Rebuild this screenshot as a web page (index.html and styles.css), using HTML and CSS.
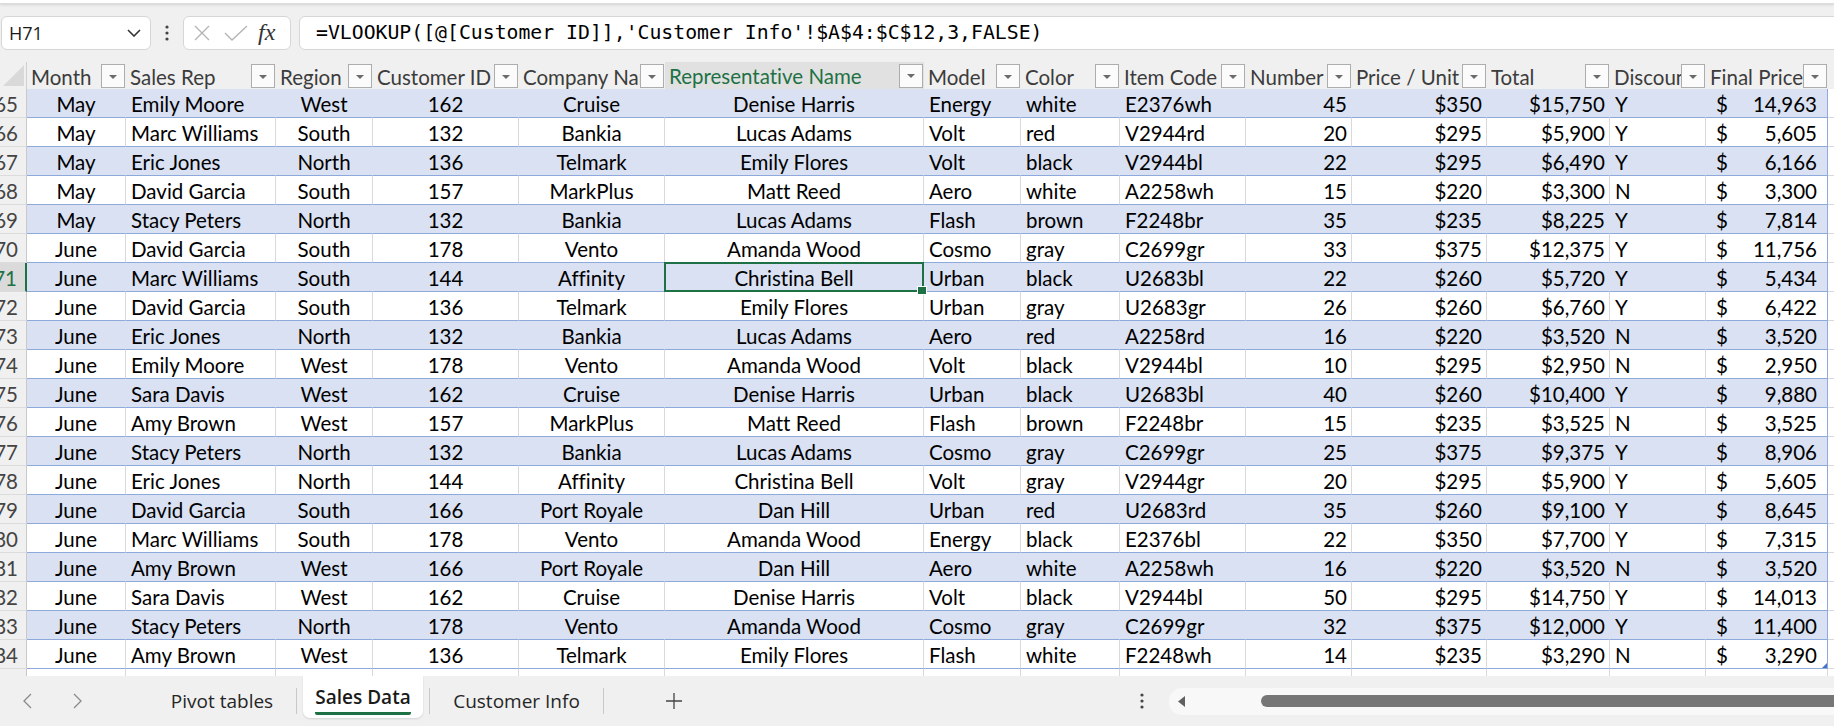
FILE: index.html
```html
<!DOCTYPE html>
<html>
<head>
<meta charset="utf-8">
<title>Sales Data</title>
<link rel="stylesheet" href="styles.css">
</head>
<body>
<div class="ribbon-edge"></div>
<div class="formula-bar">
  <div class="namebox"><span class="ref">H71</span><svg class="chev" width="14" height="8" viewBox="0 0 14 8"><path d="M1 1 L7 7 L13 1" fill="none" stroke="#333" stroke-width="1.6"/></svg></div>
  <div class="fb-dots"><svg width="4" height="16" viewBox="0 0 4 16"><circle cx="2" cy="2" r="1.6" fill="#444"/><circle cx="2" cy="8" r="1.6" fill="#444"/><circle cx="2" cy="14" r="1.6" fill="#444"/></svg></div>
  <div class="fxbox">
    <svg class="ic-x" width="16" height="16" viewBox="0 0 16 16"><path d="M1 1 L15 15 M15 1 L1 15" stroke="#b3b3b3" stroke-width="1.3" fill="none"/></svg>
    <svg class="ic-ok" width="24" height="16" viewBox="0 0 24 16"><path d="M1 8 L8 15 L23 1" stroke="#b3b3b3" stroke-width="1.3" fill="none"/></svg>
    <span class="fx">fx</span>
  </div>
  <div class="formula">=VLOOKUP([@[Customer ID]],'Customer Info'!$A$4:$C$12,3,FALSE)</div>
</div>

<div class="sheet">
  <div class="row head">
    <div class="corner"><svg width="27" height="27" viewBox="0 0 27 27"><polygon points="24,3 24,24 3,24" fill="#d9d9d9"/></svg></div>
    <div class="hc"><span class="hl">Month</span><span class="fbtn"><i></i></span></div>
    <div class="hc"><span class="hl">Sales Rep</span><span class="fbtn"><i></i></span></div>
    <div class="hc"><span class="hl">Region</span><span class="fbtn"><i></i></span></div>
    <div class="hc"><span class="hl">Customer ID</span><span class="fbtn"><i></i></span></div>
    <div class="hc"><span class="hl">Company Name</span><span class="fbtn"><i></i></span></div>
    <div class="hc selcol"><span class="hl">Representative Name</span><span class="fbtn"><i></i></span></div>
    <div class="hc"><span class="hl">Model</span><span class="fbtn"><i></i></span></div>
    <div class="hc"><span class="hl">Color</span><span class="fbtn"><i></i></span></div>
    <div class="hc"><span class="hl">Item Code</span><span class="fbtn"><i></i></span></div>
    <div class="hc"><span class="hl">Number</span><span class="fbtn"><i></i></span></div>
    <div class="hc"><span class="hl">Price / Unit</span><span class="fbtn"><i></i></span></div>
    <div class="hc"><span class="hl">Total</span><span class="fbtn"><i></i></span></div>
    <div class="hc"><span class="hl">Discount</span><span class="fbtn"><i></i></span></div>
    <div class="hc"><span class="hl">Final Price</span><span class="fbtn"><i></i></span></div>
    <div class="hc out"></div>
  </div>

  <div class="row band"><div class="rh">65</div><div class="c ctr">May</div><div class="c">Emily Moore</div><div class="c ctr">West</div><div class="c ctr">162</div><div class="c ctr">Cruise</div><div class="c ctr">Denise Harris</div><div class="c">Energy</div><div class="c">white</div><div class="c">E2376wh</div><div class="c num">45</div><div class="c num">$350</div><div class="c num">$15,750</div><div class="c">Y</div><div class="c acct last"><span>$</span><span>14,963</span></div><div class="c out"></div></div>
  <div class="row plain"><div class="rh">66</div><div class="c ctr">May</div><div class="c">Marc Williams</div><div class="c ctr">South</div><div class="c ctr">132</div><div class="c ctr">Bankia</div><div class="c ctr">Lucas Adams</div><div class="c">Volt</div><div class="c">red</div><div class="c">V2944rd</div><div class="c num">20</div><div class="c num">$295</div><div class="c num">$5,900</div><div class="c">Y</div><div class="c acct last"><span>$</span><span>5,605</span></div><div class="c out"></div></div>
  <div class="row band"><div class="rh">67</div><div class="c ctr">May</div><div class="c">Eric Jones</div><div class="c ctr">North</div><div class="c ctr">136</div><div class="c ctr">Telmark</div><div class="c ctr">Emily Flores</div><div class="c">Volt</div><div class="c">black</div><div class="c">V2944bl</div><div class="c num">22</div><div class="c num">$295</div><div class="c num">$6,490</div><div class="c">Y</div><div class="c acct last"><span>$</span><span>6,166</span></div><div class="c out"></div></div>
  <div class="row plain"><div class="rh">68</div><div class="c ctr">May</div><div class="c">David Garcia</div><div class="c ctr">South</div><div class="c ctr">157</div><div class="c ctr">MarkPlus</div><div class="c ctr">Matt Reed</div><div class="c">Aero</div><div class="c">white</div><div class="c">A2258wh</div><div class="c num">15</div><div class="c num">$220</div><div class="c num">$3,300</div><div class="c">N</div><div class="c acct last"><span>$</span><span>3,300</span></div><div class="c out"></div></div>
  <div class="row band"><div class="rh">69</div><div class="c ctr">May</div><div class="c">Stacy Peters</div><div class="c ctr">North</div><div class="c ctr">132</div><div class="c ctr">Bankia</div><div class="c ctr">Lucas Adams</div><div class="c">Flash</div><div class="c">brown</div><div class="c">F2248br</div><div class="c num">35</div><div class="c num">$235</div><div class="c num">$8,225</div><div class="c">Y</div><div class="c acct last"><span>$</span><span>7,814</span></div><div class="c out"></div></div>
  <div class="row plain"><div class="rh">70</div><div class="c ctr">June</div><div class="c">David Garcia</div><div class="c ctr">South</div><div class="c ctr">178</div><div class="c ctr">Vento</div><div class="c ctr">Amanda Wood</div><div class="c">Cosmo</div><div class="c">gray</div><div class="c">C2699gr</div><div class="c num">33</div><div class="c num">$375</div><div class="c num">$12,375</div><div class="c">Y</div><div class="c acct last"><span>$</span><span>11,756</span></div><div class="c out"></div></div>
  <div class="row band"><div class="rh selrow">71</div><div class="c ctr">June</div><div class="c">Marc Williams</div><div class="c ctr">South</div><div class="c ctr">144</div><div class="c ctr">Affinity</div><div class="c ctr sel">Christina Bell</div><div class="c">Urban</div><div class="c">black</div><div class="c">U2683bl</div><div class="c num">22</div><div class="c num">$260</div><div class="c num">$5,720</div><div class="c">Y</div><div class="c acct last"><span>$</span><span>5,434</span></div><div class="c out"></div></div>
  <div class="row plain"><div class="rh">72</div><div class="c ctr">June</div><div class="c">David Garcia</div><div class="c ctr">South</div><div class="c ctr">136</div><div class="c ctr">Telmark</div><div class="c ctr">Emily Flores</div><div class="c">Urban</div><div class="c">gray</div><div class="c">U2683gr</div><div class="c num">26</div><div class="c num">$260</div><div class="c num">$6,760</div><div class="c">Y</div><div class="c acct last"><span>$</span><span>6,422</span></div><div class="c out"></div></div>
  <div class="row band"><div class="rh">73</div><div class="c ctr">June</div><div class="c">Eric Jones</div><div class="c ctr">North</div><div class="c ctr">132</div><div class="c ctr">Bankia</div><div class="c ctr">Lucas Adams</div><div class="c">Aero</div><div class="c">red</div><div class="c">A2258rd</div><div class="c num">16</div><div class="c num">$220</div><div class="c num">$3,520</div><div class="c">N</div><div class="c acct last"><span>$</span><span>3,520</span></div><div class="c out"></div></div>
  <div class="row plain"><div class="rh">74</div><div class="c ctr">June</div><div class="c">Emily Moore</div><div class="c ctr">West</div><div class="c ctr">178</div><div class="c ctr">Vento</div><div class="c ctr">Amanda Wood</div><div class="c">Volt</div><div class="c">black</div><div class="c">V2944bl</div><div class="c num">10</div><div class="c num">$295</div><div class="c num">$2,950</div><div class="c">N</div><div class="c acct last"><span>$</span><span>2,950</span></div><div class="c out"></div></div>
  <div class="row band"><div class="rh">75</div><div class="c ctr">June</div><div class="c">Sara Davis</div><div class="c ctr">West</div><div class="c ctr">162</div><div class="c ctr">Cruise</div><div class="c ctr">Denise Harris</div><div class="c">Urban</div><div class="c">black</div><div class="c">U2683bl</div><div class="c num">40</div><div class="c num">$260</div><div class="c num">$10,400</div><div class="c">Y</div><div class="c acct last"><span>$</span><span>9,880</span></div><div class="c out"></div></div>
  <div class="row plain"><div class="rh">76</div><div class="c ctr">June</div><div class="c">Amy Brown</div><div class="c ctr">West</div><div class="c ctr">157</div><div class="c ctr">MarkPlus</div><div class="c ctr">Matt Reed</div><div class="c">Flash</div><div class="c">brown</div><div class="c">F2248br</div><div class="c num">15</div><div class="c num">$235</div><div class="c num">$3,525</div><div class="c">N</div><div class="c acct last"><span>$</span><span>3,525</span></div><div class="c out"></div></div>
  <div class="row band"><div class="rh">77</div><div class="c ctr">June</div><div class="c">Stacy Peters</div><div class="c ctr">North</div><div class="c ctr">132</div><div class="c ctr">Bankia</div><div class="c ctr">Lucas Adams</div><div class="c">Cosmo</div><div class="c">gray</div><div class="c">C2699gr</div><div class="c num">25</div><div class="c num">$375</div><div class="c num">$9,375</div><div class="c">Y</div><div class="c acct last"><span>$</span><span>8,906</span></div><div class="c out"></div></div>
  <div class="row plain"><div class="rh">78</div><div class="c ctr">June</div><div class="c">Eric Jones</div><div class="c ctr">North</div><div class="c ctr">144</div><div class="c ctr">Affinity</div><div class="c ctr">Christina Bell</div><div class="c">Volt</div><div class="c">gray</div><div class="c">V2944gr</div><div class="c num">20</div><div class="c num">$295</div><div class="c num">$5,900</div><div class="c">Y</div><div class="c acct last"><span>$</span><span>5,605</span></div><div class="c out"></div></div>
  <div class="row band"><div class="rh">79</div><div class="c ctr">June</div><div class="c">David Garcia</div><div class="c ctr">South</div><div class="c ctr">166</div><div class="c ctr">Port Royale</div><div class="c ctr">Dan Hill</div><div class="c">Urban</div><div class="c">red</div><div class="c">U2683rd</div><div class="c num">35</div><div class="c num">$260</div><div class="c num">$9,100</div><div class="c">Y</div><div class="c acct last"><span>$</span><span>8,645</span></div><div class="c out"></div></div>
  <div class="row plain"><div class="rh">80</div><div class="c ctr">June</div><div class="c">Marc Williams</div><div class="c ctr">South</div><div class="c ctr">178</div><div class="c ctr">Vento</div><div class="c ctr">Amanda Wood</div><div class="c">Energy</div><div class="c">black</div><div class="c">E2376bl</div><div class="c num">22</div><div class="c num">$350</div><div class="c num">$7,700</div><div class="c">Y</div><div class="c acct last"><span>$</span><span>7,315</span></div><div class="c out"></div></div>
  <div class="row band"><div class="rh">81</div><div class="c ctr">June</div><div class="c">Amy Brown</div><div class="c ctr">West</div><div class="c ctr">166</div><div class="c ctr">Port Royale</div><div class="c ctr">Dan Hill</div><div class="c">Aero</div><div class="c">white</div><div class="c">A2258wh</div><div class="c num">16</div><div class="c num">$220</div><div class="c num">$3,520</div><div class="c">N</div><div class="c acct last"><span>$</span><span>3,520</span></div><div class="c out"></div></div>
  <div class="row plain"><div class="rh">82</div><div class="c ctr">June</div><div class="c">Sara Davis</div><div class="c ctr">West</div><div class="c ctr">162</div><div class="c ctr">Cruise</div><div class="c ctr">Denise Harris</div><div class="c">Volt</div><div class="c">black</div><div class="c">V2944bl</div><div class="c num">50</div><div class="c num">$295</div><div class="c num">$14,750</div><div class="c">Y</div><div class="c acct last"><span>$</span><span>14,013</span></div><div class="c out"></div></div>
  <div class="row band"><div class="rh">83</div><div class="c ctr">June</div><div class="c">Stacy Peters</div><div class="c ctr">North</div><div class="c ctr">178</div><div class="c ctr">Vento</div><div class="c ctr">Amanda Wood</div><div class="c">Cosmo</div><div class="c">gray</div><div class="c">C2699gr</div><div class="c num">32</div><div class="c num">$375</div><div class="c num">$12,000</div><div class="c">Y</div><div class="c acct last"><span>$</span><span>11,400</span></div><div class="c out"></div></div>
  <div class="row plain"><div class="rh">84</div><div class="c ctr">June</div><div class="c">Amy Brown</div><div class="c ctr">West</div><div class="c ctr">136</div><div class="c ctr">Telmark</div><div class="c ctr">Emily Flores</div><div class="c">Flash</div><div class="c">white</div><div class="c">F2248wh</div><div class="c num">14</div><div class="c num">$235</div><div class="c num">$3,290</div><div class="c">N</div><div class="c acct last endcell"><span>$</span><span>3,290</span></div><div class="c out"></div></div>
  <div class="row partial"><div class="rh"></div><div class="c"></div><div class="c"></div><div class="c"></div><div class="c"></div><div class="c"></div><div class="c"></div><div class="c"></div><div class="c"></div><div class="c"></div><div class="c"></div><div class="c"></div><div class="c"></div><div class="c"></div><div class="c"></div><div class="c"></div></div>
</div>

<div class="tabbar">
  <div class="nav">
    <svg class="arrow" width="9" height="16" viewBox="0 0 9 16"><path d="M8 1 L1 8 L8 15" fill="none" stroke="#8a8a8a" stroke-width="1.3"/></svg>
    <svg class="arrow" width="9" height="16" viewBox="0 0 9 16"><path d="M1 1 L8 8 L1 15" fill="none" stroke="#8a8a8a" stroke-width="1.3"/></svg>
  </div>
  <div class="tab t1">Pivot tables</div>
  <div class="tsep"></div>
  <div class="tab active"><span>Sales Data</span></div>
  <div class="tsep"></div>
  <div class="tab t3">Customer Info</div>
  <div class="tsep"></div>
  <div class="addtab"><svg width="16" height="16" viewBox="0 0 16 16"><path d="M8 0 V16 M0 8 H16" stroke="#444" stroke-width="1.3"/></svg></div>
  <div class="hscroll">
    <div class="hs-dots"><svg width="4" height="16" viewBox="0 0 4 16"><circle cx="2" cy="2" r="1.6" fill="#444"/><circle cx="2" cy="8" r="1.6" fill="#444"/><circle cx="2" cy="14" r="1.6" fill="#444"/></svg></div>
    <div class="track">
      <svg class="larrow" width="7" height="11" viewBox="0 0 7 11"><path d="M7 0 L0 5.5 L7 11 Z" fill="#606060"/></svg>
      <div class="thumb"></div>
    </div>
  </div>
</div>
</body>
</html>
```

FILE: styles.css
```css
* { box-sizing: border-box; }
html, body { margin: 0; padding: 0; }
body {
  width: 1834px;
  height: 726px;
  overflow: hidden;
  background: #f0f0f0;
  font-family: Lato, "Noto Sans", sans-serif;
  font-variant-ligatures: none;
  font-feature-settings: "liga" 0, "clig" 0, "dlig" 0;
  color: #000;
}

/* ribbon edge */
.ribbon-edge {
  height: 4px;
  background: #fff;
  border-bottom: 1px solid #dcdcdc;
  box-shadow: 0 1px 3px rgba(0, 0, 0, 0.12);
}

/* formula bar */
.formula-bar {
  display: flex;
  height: 34px;
  margin-top: 12px;
}
.namebox {
  width: 150px;
  margin-left: 1px;
  background: #fff;
  border: 1px solid #d6d6d6;
  border-radius: 6px;
  display: flex;
  align-items: center;
  justify-content: space-between;
  padding: 0 9px 0 7px;
  font-family: "Open Sans", sans-serif;
  font-size: 18px;
  color: #1a1a1a;
}
.chev { display: block; }
.fb-dots {
  width: 32px;
  display: flex;
  align-items: center;
  justify-content: center;
}
.fxbox {
  width: 108px;
  background: #fff;
  border: 1px solid #d6d6d6;
  border-radius: 6px;
  display: flex;
  align-items: center;
  padding-left: 10px;
}
.ic-x { margin-right: 14px; }
.ic-ok { margin-right: 10px; }
.fx {
  font-family: "Liberation Serif", "DejaVu Serif", serif;
  font-style: italic;
  font-size: 24px;
  color: #333;
  line-height: 1;
  margin-top: -3px;
}
.formula {
  flex: 1;
  margin-left: 8px;
  margin-right: -12px;
  background: #fff;
  border: 1px solid #d6d6d6;
  border-radius: 6px;
  padding-left: 16px;
  font-family: "DejaVu Sans Mono", "Liberation Mono", monospace;
  font-size: 19.8px;
  line-height: 32px;
  white-space: nowrap;
  color: #000;
}

/* sheet */
.sheet {
  margin-top: 12px;
  width: 1834px;
  overflow: hidden;
}
.row {
  display: grid;
  grid-template-columns: 27px 99px 150px 97px 146px 146px 259px 97px 99px 126px 106px 135px 123px 96px 122px 100px;
  width: 1927px;
  height: 29px;
}
.row.head { height: 27px; background: #f0f0f0; }
.row.partial { height: 7px; }

.corner {
  border-right: 1px solid #cfcfcf;
  border-bottom: 1px solid #cfcfcf;
}
.corner svg { display: block; }

.hc {
  display: flex;
  align-items: center;
  padding-left: 4px;
  border-bottom: 1px solid #cfcfcf;
  color: #3c3c3c;
  font-size: 20.5px;
  min-width: 0;
}
.hl {
  flex: 1;
  min-width: 0;
  overflow: hidden;
  white-space: nowrap;
  line-height: 26px;
  padding-top: 1px;
}
.fbtn {
  flex: none;
  width: 24px;
  height: 24px;
  margin-right: 1px;
  border: 1px solid #adadad;
  background: #fbfbfb;
  display: flex;
  align-items: center;
  justify-content: center;
}
.fbtn i {
  display: block;
  width: 0;
  height: 0;
  border-left: 4px solid transparent;
  border-right: 4px solid transparent;
  border-top: 4px solid #6b6b6b;
  margin-top: 1px;
}
.hc.selcol {
  background: #e1e1e1;
  color: #1e7145;
  border-bottom: 2px solid #1e7145;
}
.hc.out { border-bottom-color: #cfcfcf; }

/* row headers */
.rh {
  background: #f0f0f0;
  border-right: 1px solid #c9c9c9;
  border-bottom: 1px solid #dcdcdc;
  display: flex;
  justify-content: flex-end;
  padding-right: 8px;
  padding-top: 3px;
  font-size: 20.5px;
  line-height: 25px;
  color: #444;
  overflow: hidden;
  white-space: nowrap;
}
.rh.selrow {
  background: #dadada;
  color: #1e7145;
  border-right: 2px solid #1e7145;
}

/* cells */
.c {
  font-size: 20.5px;
  line-height: 25px;
  padding: 3px 4px 0 5px;
  white-space: nowrap;
  overflow: hidden;
  border-bottom: 1px solid #8ea9db;
  border-right: 1px solid #d9d9d9;
  min-width: 0;
}
.band .c { background: #d9e1f2; border-right-color: #d9e1f2; }
.plain .c { background: #fff; }
.c.ctr { text-align: center; padding-left: 4px; padding-right: 4px; }
.c.num { text-align: right; padding-right: 4px; }
.c.acct {
  display: flex;
  justify-content: space-between;
  padding-left: 10px;
  padding-right: 10px;
}
.c.last { border-right-color: #8ea9db; }
.band .c.last { border-right-color: #8ea9db; }
.row .c.out {
  background: #fff;
  border-right-color: #d9d9d9;
  border-bottom-color: #d9d9d9;
}
.partial .c {
  background: #fff;
  border-bottom: none;
  border-right-color: #d9d9d9;
}
.partial .rh { border-bottom: none; }

/* active cell */
.c.sel {
  position: relative;
  overflow: visible;
}
.c.sel::after {
  content: "";
  position: absolute;
  left: -1px;
  top: -1px;
  right: -1px;
  bottom: -1px;
  border: 2px solid #1e7145;
  z-index: 2;
}
.c.sel::before {
  content: "";
  position: absolute;
  right: -4px;
  bottom: -4px;
  width: 8px;
  height: 7px;
  background: #1e7145;
  border: 1px solid #fff;
  z-index: 3;
}
.c.endcell { position: relative; }
.c.endcell::after {
  content: "";
  position: absolute;
  right: 0;
  bottom: 0;
  width: 0;
  height: 0;
  border-left: 5px solid transparent;
  border-bottom: 5px solid #4472c4;
}

/* tab bar */
.tabbar {
  height: 50px;
  display: flex;
  align-items: center;
  background: #f0f0f0;
}
.nav {
  width: 148px;
  height: 100%;
  display: flex;
  align-items: center;
  padding-left: 23px;
  gap: 41px;
}
.arrow { display: block; }
.tab {
  height: 100%;
  display: flex;
  align-items: center;
  justify-content: center;
  font-family: "Open Sans", sans-serif;
  font-size: 19px;
  color: #262626;
  white-space: nowrap;
}
.t1 { width: 148px; }
.t3 { width: 173px; }
.tsep {
  width: 1px;
  height: 26px;
  background: #c8c8c8;
}
.tab.active {
  width: 120px;
  height: 42px;
  align-self: flex-start;
  margin: 0 6px 0 6px;
  background: #fff;
  border-radius: 0 0 7px 7px;
  box-shadow: 0 1px 2px rgba(0, 0, 0, 0.12);
  font-weight: 600;
  color: #1a1a1a;
}
.tab.active span {
  display: inline-block;
  padding-bottom: 2px;
  border-bottom: 3px solid #1e7145;
  border-radius: 2px;
  line-height: 26px;
  margin-top: 4px;
}
.addtab {
  width: 140px;
  display: flex;
  justify-content: center;
}
.addtab svg { display: block; }
.hscroll {
  flex: 1;
  display: flex;
  align-items: center;
  margin-left: 385px;
  margin-right: -12px;
}
.hs-dots {
  width: 26px;
  display: flex;
  justify-content: center;
}
.track {
  flex: 1;
  height: 27px;
  margin-left: 14px;
  background: #f8f8f8;
  border-radius: 13px;
  display: flex;
  align-items: center;
  padding-left: 9px;
}
.larrow { display: block; }
.thumb {
  flex: 1;
  height: 12px;
  margin-left: 76px;
  background: #767676;
  border-radius: 6px;
}
```
